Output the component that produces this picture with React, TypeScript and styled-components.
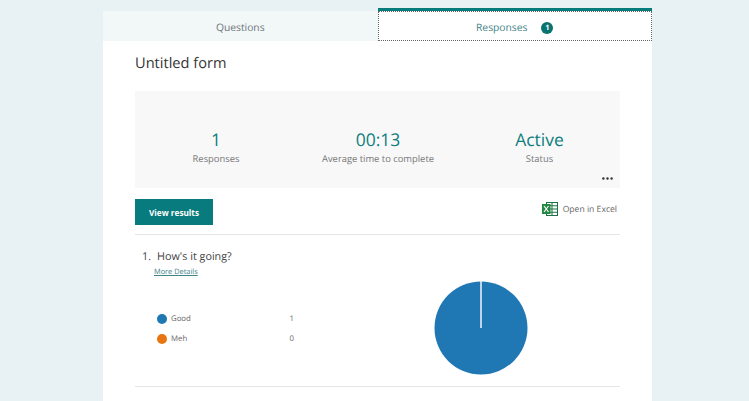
import React from 'react'
import styled, { createGlobalStyle } from 'styled-components';

const GlobalStyle = createGlobalStyle`
  html, body {
    margin: 0;
    padding: 0;
    height: 100%;
    overflow: hidden;
    background: #e8f1f4;
    font-family: "Open Sans", "Noto Sans", sans-serif;
    text-rendering: geometricPrecision;
  }
`;

const stats = [
  { value: '1', label: 'Responses' },
  { value: '00:13', label: 'Average time to complete' },
  { value: 'Active', label: 'Status' },
];

const options = [
  { name: 'Good', count: 1, color: '#1f77b4' },
  { name: 'Meh', count: 0, color: '#e8750f' },
];

const ExcelIcon = () => (
  <svg width="16" height="14" viewBox="0 0 16 14">
    <rect x="4.5" y="0.5" width="11" height="13" fill="#fff" stroke="#1e7145" />
    <path d="M4.5 3.75h11M4.5 7h11M4.5 10.25h11M10 0.5v13" stroke="#1e7145" fill="none" />
    <rect x="0" y="2" width="8.5" height="10" fill="#23883f" />
    <path d="M2 4l4.5 6M6.5 4L2 10" stroke="#fff" strokeWidth="1.2" fill="none" />
  </svg>
);

const DotsIcon = () => (
  <svg width="11" height="3" viewBox="0 0 11 3">
    <circle cx="1.4" cy="1.5" r="1.2" fill="#333" />
    <circle cx="5.5" cy="1.5" r="1.2" fill="#333" />
    <circle cx="9.6" cy="1.5" r="1.2" fill="#333" />
  </svg>
);

const App: React.FC = () => {
  return (
    <Page>
      <GlobalStyle />
      <Tabs>
        <QuestionsTab>Questions</QuestionsTab>
        <ResponsesTab>
          <ResponsesInner>
            Responses
            <Badge>1</Badge>
          </ResponsesInner>
        </ResponsesTab>
      </Tabs>
      <Card>
        <Title>Untitled form</Title>
        <StatsPanel>
          {stats.map((stat) => (
            <Stat key={stat.label}>
              <StatValue>{stat.value}</StatValue>
              <StatLabel>{stat.label}</StatLabel>
            </Stat>
          ))}
          <MoreDots>
            <DotsIcon />
          </MoreDots>
        </StatsPanel>
        <ActionRow>
          <ViewButton>View results</ViewButton>
          <ExcelLink>
            <ExcelIcon />
            Open in Excel
          </ExcelLink>
        </ActionRow>
        <QuestionSection>
          <QuestionTitle>
            <span>1.</span>
            <span>How's it going?</span>
          </QuestionTitle>
          <MoreDetails>More Details</MoreDetails>
          <ResultRow>
            <Legend>
              {options.map((option) => (
                <LegendRow key={option.name}>
                  <Dot $color={option.color} />
                  <OptionName>{option.name}</OptionName>
                  <OptionCount>{option.count}</OptionCount>
                </LegendRow>
              ))}
            </Legend>
            <PieChart width="94" height="94" viewBox="0 0 94 94">
              <circle cx="47" cy="47" r="46.5" fill="#1f77b4" />
              <path d="M47 0v47" stroke="#fff" strokeWidth="1.4" />
            </PieChart>
          </ResultRow>
        </QuestionSection>
      </Card>
    </Page>
  );
};

export default App

const Page = styled.div`
  width: 549px;
  height: 393px;
  margin-left: 103px;
  padding-top: 8px;
  display: flex;
  flex-direction: column;
`;

const Tabs = styled.div`
  display: flex;
  align-items: flex-end;
  height: 33px;
  flex-shrink: 0;
`;

const QuestionsTab = styled.div`
  width: 274.5px;
  height: 30px;
  box-sizing: border-box;
  padding-top: 3px;
  background: #f2f7f8;
  color: #6f7678;
  font-size: 10.3px;
  display: flex;
  align-items: center;
  justify-content: center;
`;

const ResponsesTab = styled.div`
  width: 274.5px;
  height: 33px;
  box-sizing: border-box;
  border-top: 3px solid #077d7b;
  background: #fff;
`;

const ResponsesInner = styled.div`
  height: 100%;
  box-sizing: border-box;
  border: 1px dotted #666;
  padding-top: 3px;
  color: #3f8487;
  font-size: 10.3px;
  display: flex;
  align-items: center;
  justify-content: center;
  gap: 14px;
`;

const Badge = styled.span`
  width: 12px;
  height: 12px;
  border-radius: 50%;
  background: #077470;
  color: #fff;
  font-size: 7.5px;
  font-weight: 700;
  display: flex;
  align-items: center;
  justify-content: center;
`;

const Card = styled.div`
  flex: 1;
  background: #fff;
  padding: 0 32px;
  display: flex;
  flex-direction: column;
`;

const Title = styled.div`
  height: 50px;
  padding-top: 12px;
  box-sizing: border-box;
  font-size: 14.6px;
  line-height: 20px;
  color: #333;
`;

const StatsPanel = styled.div`
  position: relative;
  height: 97px;
  flex-shrink: 0;
  background: #f8f8f8;
  display: grid;
  grid-template-columns: 162px 162px 161px;
  padding-top: 38px;
  box-sizing: border-box;
`;

const Stat = styled.div`
  display: flex;
  flex-direction: column;
  align-items: center;
`;

const StatValue = styled.div`
  font-size: 17.5px;
  line-height: 22px;
  color: #0f7e80;
`;

const StatLabel = styled.div`
  font-size: 9.4px;
  line-height: 14px;
  margin-top: 1px;
  color: #777;
`;

const MoreDots = styled.div`
  position: absolute;
  right: 7px;
  bottom: 8px;
  display: flex;
`;

const ActionRow = styled.div`
  display: flex;
  align-items: center;
  justify-content: space-between;
  padding: 11px 3px 9px 0;
  border-bottom: 1px solid #e6e6e6;
`;

const ViewButton = styled.button`
  width: 78px;
  height: 26px;
  border: none;
  padding: 0;
  background: #077b7d;
  color: #fff;
  font-family: inherit;
  font-size: 8.2px;
  font-weight: 700;
`;

const ExcelLink = styled.div`
  display: flex;
  align-items: center;
  gap: 5px;
  margin-top: -6px;
  font-size: 8.6px;
  color: #666;
`;

const QuestionSection = styled.div`
  height: 152px;
  flex-shrink: 0;
  box-sizing: border-box;
  border-bottom: 1px solid #e6e6e6;
  padding: 14px 0 0 7px;
  display: flex;
  flex-direction: column;
`;

const QuestionTitle = styled.div`
  display: flex;
  gap: 6px;
  font-size: 10.8px;
  line-height: 16px;
  color: #444;
`;

const MoreDetails = styled.a`
  margin: 2px 0 0 12px;
  font-size: 7.4px;
  line-height: 11px;
  color: #3f8487;
  text-decoration: underline;
`;

const ResultRow = styled.div`
  position: relative;
  flex: 1;
  display: flex;
  justify-content: space-between;
`;

const Legend = styled.div`
  display: flex;
  flex-direction: column;
  gap: 9px;
  padding: 35px 0 0 15px;
`;

const LegendRow = styled.div`
  display: flex;
  align-items: center;
  height: 11px;
`;

const Dot = styled.span<{ $color: string }>`
  width: 10px;
  height: 10px;
  border-radius: 50%;
  background: ${(props) => props.$color};
  margin-right: 4px;
`;

const OptionName = styled.span`
  width: 118.5px;
  font-size: 7.8px;
  color: #666;
`;

const OptionCount = styled.span`
  font-size: 7.8px;
  color: #666;
`;

const PieChart = styled.svg`
  position: absolute;
  left: 292px;
  top: 3px;
`;
